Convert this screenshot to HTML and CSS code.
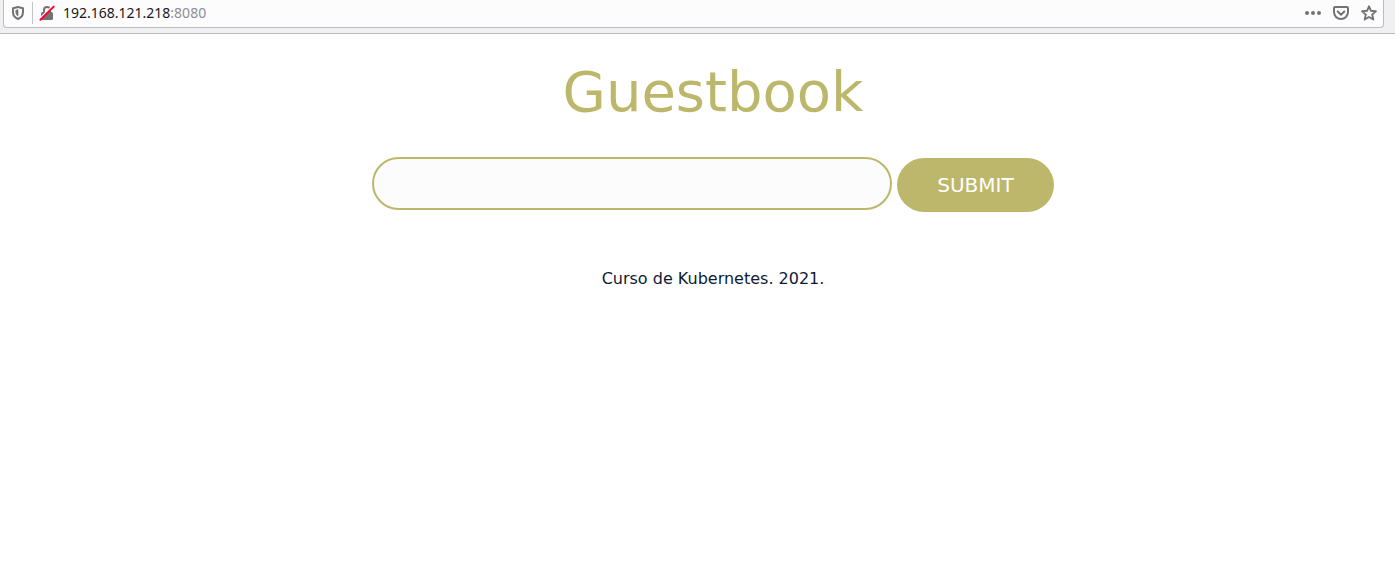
FILE: index.html
```html
<!DOCTYPE html>
<html lang="es">
<head>
<meta charset="utf-8">
<title>Guestbook</title>
<link rel="stylesheet" href="styles.css">
</head>
<body>
<header class="toolbar">
  <div class="urlbar">
    <button class="icon-button shield" type="button" aria-label="Tracking protection">
      <svg width="16" height="16" viewBox="0 0 16 16"><path d="M8 2 13 3.300V7c0 3.500-1.800 5.700-5 7C4.800 12.700 3 10.500 3 7V3.300Z" fill="none" stroke="#737373" stroke-width="2" stroke-linejoin="round"/><path d="M8.300 4.300V11.500C6.300 10.300 5.500 8.900 5.500 7V5Z" fill="#737373"/></svg>
    </button>
    <span class="divider"></span>
    <button class="icon-button" type="button" aria-label="Connection is not secure">
      <svg width="16" height="16" viewBox="0 0 16 16"><rect x="2" y="7" width="12" height="8" rx="1.500" fill="#737373"/><path d="M5 8V5a3 3 0 0 1 6 0v3" fill="none" stroke="#737373" stroke-width="2"/><path d="M.4 13.900 13.600.7" stroke="#fcfcfc" stroke-width="1.500"/><path d="M1.500 14.800 14.700 1.600" stroke="#ff0039" stroke-width="2" stroke-linecap="round"/></svg>
    </button>
    <div class="address"><span class="host">192.168.121.218</span>:8080</div>
    <div class="actions">
      <button class="icon-button" type="button" aria-label="Page actions">
        <svg width="16" height="16" viewBox="0 0 16 16" fill="#737373"><circle cx="2" cy="8" r="2"/><circle cx="8" cy="8" r="2"/><circle cx="14" cy="8" r="2"/></svg>
      </button>
      <button class="icon-button" type="button" aria-label="Save to Pocket">
        <svg width="16" height="16" viewBox="0 0 16 16" fill="none" stroke="#737373" stroke-width="2" stroke-linecap="round" stroke-linejoin="round"><path d="M2 2h12a1 1 0 0 1 1 1v4a7 7 0 0 1-14 0V3a1 1 0 0 1 1-1Z"/><path d="m4.700 6.500 3.300 3.200 3.300-3.200"/></svg>
      </button>
      <button class="icon-button" type="button" aria-label="Bookmark this page">
        <svg width="16" height="16" viewBox="0 0 16 16"><path d="m8 1.300 2 4.500 4.900.5-3.700 3.300 1.100 4.900L8 12l-4.300 2.500 1.100-4.900L1.100 6.300 6 5.800Z" fill="none" stroke="#737373" stroke-width="1.900" stroke-linejoin="round"/></svg>
      </button>
    </div>
  </div>
</header>
<main class="page">
  <h1 class="title">Guestbook</h1>
  <form class="entry-form">
    <input class="entry" type="text" aria-label="Guestbook entry">
    <button class="submit" type="submit">SUBMIT</button>
  </form>
  <p class="credit">Curso de Kubernetes. 2021.</p>
</main>
</body>
</html>
```
FILE: styles.css
```css
* {
  box-sizing: border-box;
}

body {
  margin: 0;
  background: #fff;
  color: #0f1a33;
  font-family: "DejaVu Sans", sans-serif;
  font-size: 16px;
}

.toolbar {
  padding: 0 11px 5px 3px;
  background: #f0f0f3;
  border-bottom: 1px solid #b8b8bb;
}

.urlbar {
  display: flex;
  align-items: center;
  height: 28px;
  padding: 0 6px 2px;
  background: #fcfcfc;
  border: 1px solid #bcbcbf;
  border-top: 0;
  border-radius: 0 0 4px 4px;
}

.icon-button {
  display: block;
  flex: none;
  width: 16px;
  height: 16px;
  padding: 0;
  border: 0;
  background: none;
}

.icon-button svg {
  display: block;
}

.divider {
  width: 1px;
  height: 22px;
  margin: 0 6px;
  background: #c4c4c6;
}

.address {
  flex: 1;
  margin-left: 8px;
  color: #8e8e93;
  font-family: "Noto Sans", sans-serif;
  font-size: 14px;
  line-height: 20px;
}

.host {
  color: #18181b;
}

.actions {
  display: flex;
  gap: 12px;
}

.page {
  padding: 24px 0 24px 31px;
  text-align: center;
}

.title {
  margin: 0;
  color: #bdb76b;
  font-size: 56px;
  font-weight: 400;
  line-height: 68px;
}

.entry-form {
  display: flex;
  justify-content: center;
  align-items: flex-start;
  gap: 5px;
  margin-top: 31px;
}

.entry {
  width: 520px;
  height: 53px;
  padding: 0 24px;
  border: 2px solid #bdb76b;
  border-radius: 27px;
  background: #fcfcfc;
  color: inherit;
  font: inherit;
}

.submit {
  height: 54px;
  margin-top: 1px;
  padding: 0 40px;
  border: 0;
  border-radius: 27px;
  background: #bdb76b;
  color: #fff;
  font-family: inherit;
  font-size: 20px;
}

.credit {
  margin: 56px 0 0;
  line-height: 22px;
}
```
